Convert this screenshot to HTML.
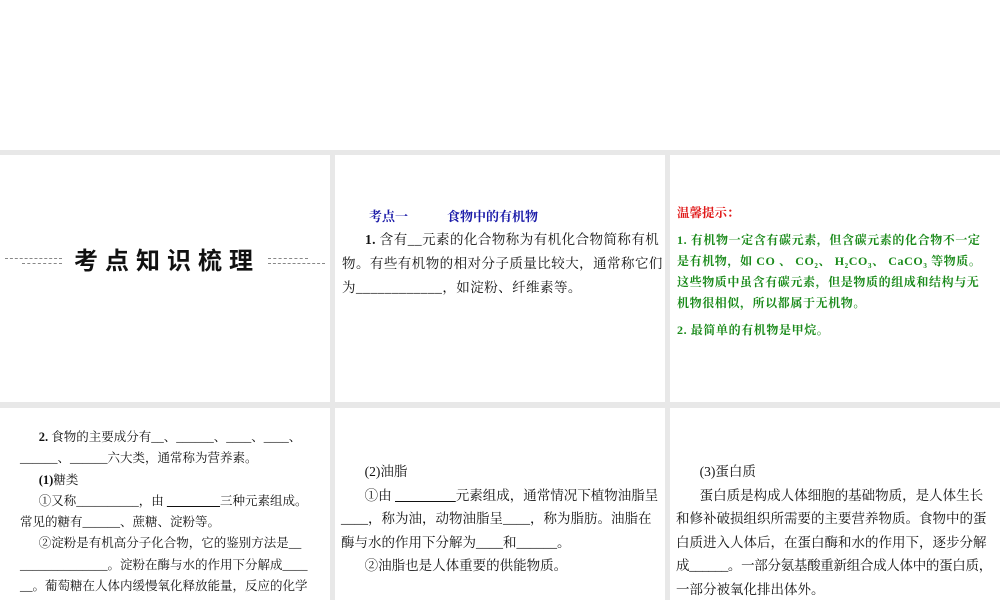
<!DOCTYPE html>
<html><head><meta charset="utf-8"><style>
body{margin:0;width:1000px;height:600px;background:#fff;position:relative;overflow:hidden;font-family:"Liberation Serif","Noto Serif CJK SC","Noto Sans CJK SC",serif;color:#111}
.g{position:absolute;background:#e8e8e8}
.t{position:absolute;white-space:nowrap}
.p{position:absolute;font-size:13.5px;line-height:24px}
.p div{white-space:nowrap}
.u{text-decoration:underline}
sub{font-size:7px;line-height:0;vertical-align:baseline;position:relative;top:3px}
</style></head><body>
<div class="g" style="left:0;top:150px;width:1000px;height:5px"></div>
<div class="g" style="left:0;top:402px;width:1000px;height:6px"></div>
<div class="g" style="left:330px;top:150px;width:5px;height:450px"></div>
<div class="g" style="left:665px;top:150px;width:5px;height:450px"></div>

<div style="position:absolute;left:5px;top:258px;width:57px;border-top:1px dashed #888"></div>
<div style="position:absolute;left:22px;top:263px;width:40px;border-top:1px dashed #888"></div>
<div style="position:absolute;left:268px;top:258px;width:40px;border-top:1px dashed #888"></div>
<div style="position:absolute;left:268px;top:263px;width:57px;border-top:1px dashed #888"></div>
<div class="t" style="left:74px;top:244px;font-size:24px;font-weight:bold;letter-spacing:7px;font-family:'Noto Sans CJK SC',sans-serif;line-height:30px">考点知识梳理</div>

<div class="t" style="left:369px;top:207px;font-size:13px;font-weight:bold;color:#1a1aa8;line-height:20px">考点一&nbsp;&nbsp;&nbsp;&nbsp;&nbsp;&nbsp;&nbsp;&nbsp;&nbsp;&nbsp;&nbsp;&nbsp;食物中的有机物</div>
<div class="p" style="left:342px;top:228px;width:318px;font-size:13.5px;letter-spacing:0.45px">
<div>&nbsp;&nbsp;&nbsp;&nbsp;&nbsp;&nbsp;<b>1.</b> 含有__元素的化合物称为有机化合物简称有机</div>
<div>物。有些有机物的相对分子质量比较大，通常称它们</div>
<div>为____________，如淀粉、纤维素等。</div></div>

<div class="t" style="left:677px;top:203px;font-size:12.5px;font-weight:bold;color:#e01818;line-height:20px">温馨提示：</div>
<div class="p" style="left:677px;top:230px;width:320px;font-size:12px;line-height:21px;font-weight:bold;color:#1a8a1a;letter-spacing:0.6px">
<div>1. 有机物一定含有碳元素，但含碳元素的化合物不一定</div>
<div>是有机物，如 CO 、 CO<sub>2</sub>、 H<sub>2</sub>CO<sub>3</sub>、 CaCO<sub>3</sub> 等物质。</div>
<div>这些物质中虽含有碳元素，但是物质的组成和结构与无</div>
<div>机物很相似，所以都属于无机物。</div>
<div style="margin-top:6px">2. 最简单的有机物是甲烷。</div></div>

<div class="p" style="left:20px;top:427px;width:300px;font-size:12.5px;line-height:21.3px">
<div>&nbsp;&nbsp;&nbsp;&nbsp;&nbsp;&nbsp;<b>2.</b> 食物的主要成分有__、______、____、____、</div>
<div>______、______六大类，通常称为营养素。</div>
<div>&nbsp;&nbsp;&nbsp;&nbsp;&nbsp;&nbsp;<b>(1)</b>糖类</div>
<div>&nbsp;&nbsp;&nbsp;&nbsp;&nbsp;&nbsp;①又称__________，由 <span class="u">&nbsp;&nbsp;&nbsp;&nbsp;&nbsp;&nbsp;&nbsp;&nbsp;&nbsp;&nbsp;&nbsp;&nbsp;&nbsp;&nbsp;&nbsp;&nbsp;&nbsp;</span>三种元素组成。</div>
<div>常见的糖有______、蔗糖、淀粉等。</div>
<div>&nbsp;&nbsp;&nbsp;&nbsp;&nbsp;&nbsp;②淀粉是有机高分子化合物，它的鉴别方法是__</div>
<div>______________。淀粉在酶与水的作用下分解成____</div>
<div>__。葡萄糖在人体内缓慢氧化释放能量，反应的化学</div></div>

<div class="p" style="left:341px;top:460px;width:322px;font-size:13.5px;line-height:23.5px">
<div>&nbsp;&nbsp;&nbsp;&nbsp;&nbsp;&nbsp;&nbsp;(2)油脂</div>
<div>&nbsp;&nbsp;&nbsp;&nbsp;&nbsp;&nbsp;&nbsp;①由 <span class="u">&nbsp;&nbsp;&nbsp;&nbsp;&nbsp;&nbsp;&nbsp;&nbsp;&nbsp;&nbsp;&nbsp;&nbsp;&nbsp;&nbsp;&nbsp;&nbsp;&nbsp;&nbsp;</span>元素组成，通常情况下植物油脂呈</div>
<div>____，称为油，动物油脂呈____，称为脂肪。油脂在</div>
<div>酶与水的作用下分解为____和______。</div>
<div>&nbsp;&nbsp;&nbsp;&nbsp;&nbsp;&nbsp;&nbsp;②油脂也是人体重要的供能物质。</div></div>

<div class="p" style="left:676px;top:460px;width:322px;font-size:13.5px;line-height:23.5px">
<div>&nbsp;&nbsp;&nbsp;&nbsp;&nbsp;&nbsp;&nbsp;(3)蛋白质</div>
<div>&nbsp;&nbsp;&nbsp;&nbsp;&nbsp;&nbsp;&nbsp;蛋白质是构成人体细胞的基础物质，是人体生长</div>
<div>和修补破损组织所需要的主要营养物质。食物中的蛋</div>
<div>白质进入人体后，在蛋白酶和水的作用下，逐步分解</div>
<div style="letter-spacing:-0.3px">成______。一部分氨基酸重新组合成人体中的蛋白质，</div>
<div>一部分被氧化排出体外。</div></div>
</body></html>
